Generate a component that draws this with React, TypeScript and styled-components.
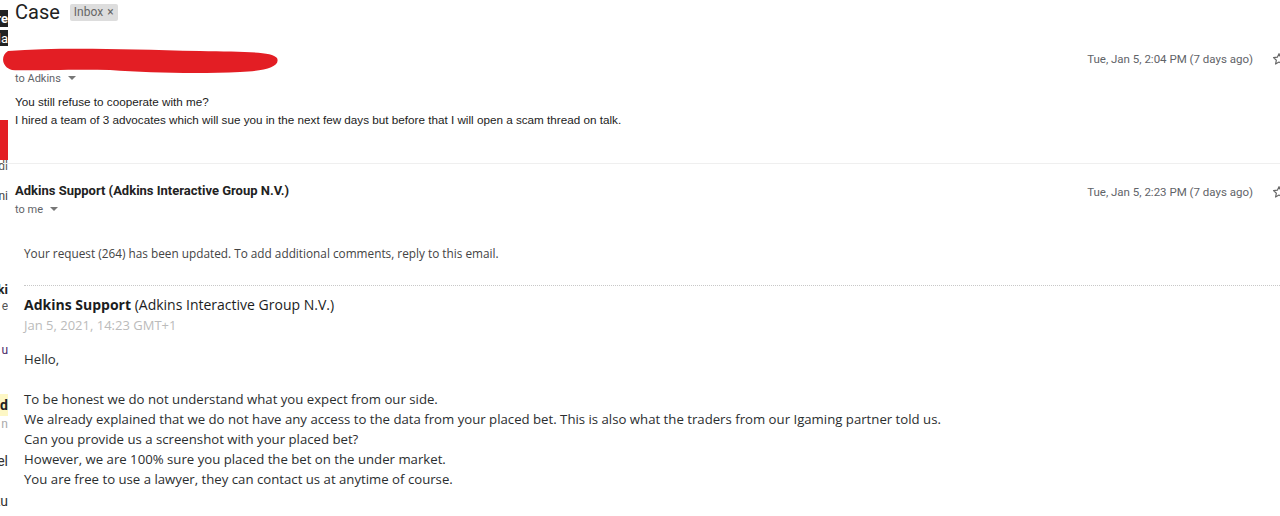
import React from "react";
import styled, { createGlobalStyle } from "styled-components";

const Global = createGlobalStyle`
  html, body { margin: 0; padding: 0; background: #fff; overflow: hidden; }
  body { width: 1280px; height: 516px; }
`;

const Page = styled.div`
  display: flex;
  width: 1280px;
  height: 516px;
  overflow: hidden;
`;

const Strip = styled.div`
  width: 8px;
  flex: none;
  display: flex;
  flex-direction: column;
  overflow: hidden;
  font-family: Roboto, "Liberation Sans", sans-serif;
`;

const Frag = styled.div<{ $h: number; $bg?: string; $color?: string; $bold?: boolean; $size?: number }>`
  height: ${(p) => p.$h}px;
  flex: none;
  display: flex;
  align-items: center;
  justify-content: flex-end;
  overflow: hidden;
  white-space: nowrap;
  background: ${(p) => p.$bg || "transparent"};
  color: ${(p) => p.$color || "#222"};
  font-weight: ${(p) => (p.$bold ? 700 : 400)};
  font-size: ${(p) => p.$size || 13}px;
`;

const Main = styled.div`
  flex: 1;
  min-width: 0;
  margin-right: -6px;
  display: flex;
  flex-direction: column;
  font-family: Roboto, "Liberation Sans", Arial, sans-serif;
`;

const TitleRow = styled.div`
  display: flex;
  align-items: center;
  gap: 10px;
  height: 24px;
  padding-left: 7px;
`;

const Title = styled.h2`
  margin: 0;
  font-family: Roboto, "Liberation Sans", sans-serif;
  font-weight: 400;
  font-size: 20px;
  color: #222;
  line-height: 24px;
`;

const Chip = styled.span`
  display: inline-flex;
  align-items: center;
  gap: 4px;
  height: 17px;
  padding: 0 4px;
  background: #ddd;
  border-radius: 2px;
  color: #666;
  font-size: 12px;
  font-family: Roboto, "Liberation Sans", sans-serif;
`;

const Message = styled.div<{ $divider?: boolean }>`
  display: flex;
  flex-direction: column;
  border-bottom: ${(p) => (p.$divider ? "1px solid #efefef" : "none")};
  margin-left: ${(p) => (p.$divider ? "-5px" : "0")};
  padding-left: ${(p) => (p.$divider ? "12px" : "7px")};
`;

const Header = styled.div<{ $top: number }>`
  display: flex;
  justify-content: space-between;
  align-items: flex-start;
  padding-top: ${(p) => p.$top}px;
`;

const Who = styled.div`
  display: flex;
  flex-direction: column;
`;

const SenderBox = styled.div`
  position: relative;
  height: 24px;
  width: 263px;
`;

const Scribble = styled.svg`
  position: absolute;
  left: -15px;
  top: 0;
`;

const SenderName = styled.div`
  font-weight: 700;
  font-size: 13px;
  color: #222;
  height: 20px;
  line-height: 20px;
`;

const ToLine = styled.div`
  display: flex;
  align-items: center;
  gap: 5px;
  font-size: 11px;
  color: #5f6368;
  height: 16px;
`;

const Caret = styled.span`
  width: 0;
  height: 0;
  border-left: 4px solid transparent;
  border-right: 4px solid transparent;
  border-top: 4px solid #777;
  margin-left: 2px;
`;

const Meta = styled.div<{ $top: number }>`
  display: flex;
  align-items: center;
  gap: 19px;
  margin-top: ${(p) => p.$top}px;
  font-size: 11.5px;
  color: #5f6368;
  white-space: nowrap;
`;

const Body = styled.div`
  padding-top: 7px;
  padding-bottom: 34px;
  font-family: Arial, "Liberation Sans", sans-serif;
  font-size: 11.7px;
  line-height: 18px;
  color: #222;
`;

const Quoted = styled.div`
  display: flex;
  flex-direction: column;
  padding-left: 9px;
  font-family: "Open Sans", "DejaVu Sans", sans-serif;
  color: #2b2e2f;
`;

const Notice = styled.div`
  margin-top: 27px;
  font-size: 11.8px;
  line-height: 18px;
  color: #444;
  padding-bottom: 23px;
  border-bottom: 1px dotted #c8c8c8;
`;

const QHead = styled.div`
  margin-top: 9px;
  font-size: 14px;
  line-height: 20px;
  color: #1b1d1e;
  & b { font-weight: 700; }
`;

const QDate = styled.div`
  font-size: 13px;
  line-height: 20px;
  color: #bbb;
`;

const Para = styled.div<{ $top: number }>`
  margin-top: ${(p) => p.$top}px;
  font-size: 13.2px;
  line-height: 20px;
  color: #2b2e2f;
`;

const Star = () => (
  <svg width="14" height="14" viewBox="0 0 24 24" fill="none" stroke="#666" strokeWidth="2">
    <path d="M12 2.8l2.8 6.1 6.6.7-4.9 4.5 1.4 6.5L12 17.3l-5.9 3.3 1.4-6.5-4.9-4.5 6.6-.7z" strokeLinejoin="round" />
  </svg>
);

export default function App() {
  return (
    <>
      <Global />
      <Page>
        <Strip>
          <Frag $h={10} />
          <Frag $h={17} $bg="#222" $color="#fff" $bold>re</Frag>
          <Frag $h={3} />
          <Frag $h={16} $bg="#222" $color="#fff">la</Frag>
          <Frag $h={74} />
          <Frag $h={40} $bg="#e31e24" />
          <Frag $h={12} $color="#555" $size={12}>dl</Frag>
          <Frag $h={16} />
          <Frag $h={16} $color="#444" $size={12}>ni</Frag>
          <Frag $h={76} />
          <Frag $h={18} $bold>ki</Frag>
          <Frag $h={16} $color="#555" $size={12}>e</Frag>
          <Frag $h={28} />
          <Frag $h={16} $color="#4a2a6a" $size={12}>u</Frag>
          <Frag $h={36} />
          <Frag $h={22} $bg="#fdf7c5" $bold $size={14}>d</Frag>
          <Frag $h={16} $color="#aaa" $size={12}>n</Frag>
          <Frag $h={20} />
          <Frag $h={18} $color="#333" $size={14}>el</Frag>
          <Frag $h={22} />
          <Frag $h={18} $color="#333" $size={14}>ku</Frag>
          <Frag $h={18} $color="#333" $size={14}>ou</Frag>
        </Strip>
        <Main>
          <TitleRow>
            <Title>Case</Title>
            <Chip>Inbox <span>×</span></Chip>
          </TitleRow>

          <Message $divider>
            <Header $top={22}>
              <Who>
                <SenderBox>
                  <Scribble width="282" height="28" viewBox="0 0 282 28">
                    <path
                      d="M8 5 C 60 1, 120 3, 200 5 C 240 6, 272 5, 277 12 C 281 21, 264 25, 240 26 C 200 28, 150 27, 110 24 C 70 23, 30 25, 12 24 C 2 21, 0 10, 8 5 Z"
                      fill="#e31e24"
                    />
                  </Scribble>
                </SenderBox>
                <ToLine>to Adkins <Caret /></ToLine>
              </Who>
              <Meta $top={6}>
                <span>Tue, Jan 5, 2:04 PM (7 days ago)</span>
                <Star />
              </Meta>
            </Header>
            <Body>
              <div>You still refuse to cooperate with me?</div>
              <div>I hired a team of 3 advocates which will sue you in the next few days but before that I will open a scam thread on talk.</div>
            </Body>
          </Message>

          <Message>
            <Header $top={17}>
              <Who>
                <SenderName>Adkins Support (Adkins Interactive Group N.V.)</SenderName>
                <ToLine>to me <Caret /></ToLine>
              </Who>
              <Meta $top={4}>
                <span>Tue, Jan 5, 2:23 PM (7 days ago)</span>
                <Star />
              </Meta>
            </Header>
            <Quoted>
              <Notice>Your request (264) has been updated. To add additional comments, reply to this email.</Notice>
              <QHead><b>Adkins Support</b> (Adkins Interactive Group N.V.)</QHead>
              <QDate>Jan 5, 2021, 14:23 GMT+1</QDate>
              <Para $top={14}>Hello,</Para>
              <Para $top={20}>
                To be honest we do not understand what you expect from our side.<br />
                We already explained that we do not have any access to the data from your placed bet. This is also what the traders from our Igaming partner told us.<br />
                Can you provide us a screenshot with your placed bet?<br />
                However, we are 100% sure you placed the bet on the under market.<br />
                You are free to use a lawyer, they can contact us at anytime of course.
              </Para>
            </Quoted>
          </Message>
        </Main>
      </Page>
    </>
  );
}
